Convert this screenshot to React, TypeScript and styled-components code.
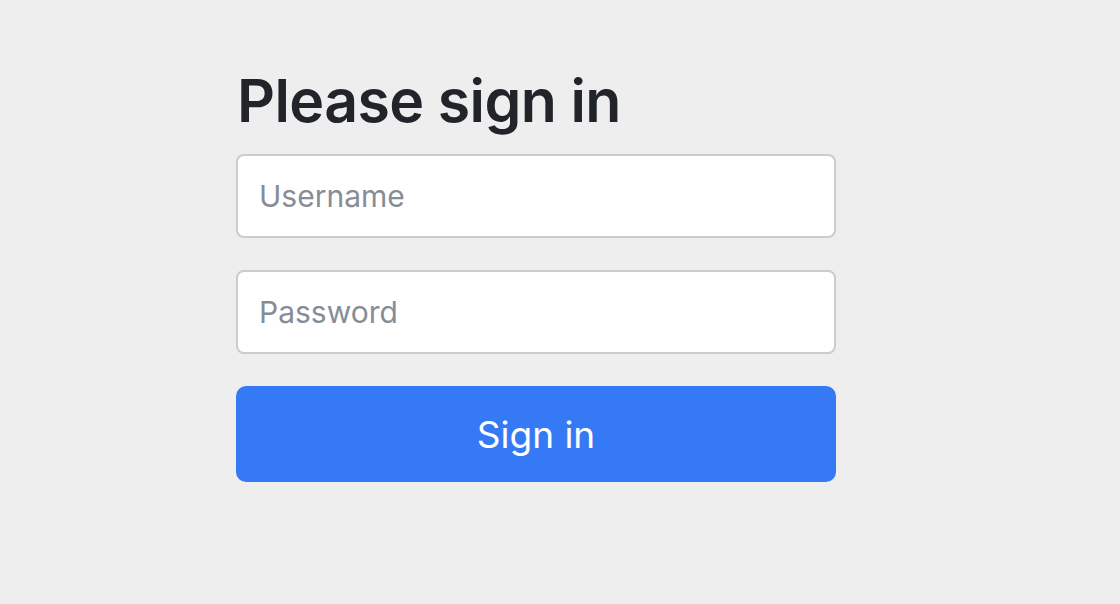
import React from "react";
import styled, { createGlobalStyle } from "styled-components";

const GlobalStyle = createGlobalStyle`
  html, body {
    margin: 0;
    padding: 0;
    background: #eeeeee;
  }
  body {
    font-family: Inter, "Liberation Sans", sans-serif;
  }
`;

const Page = styled.div`
  width: 1120px;
  height: 604px;
  background: #eeeeee;
  box-sizing: border-box;
  padding: 66px 0 0 236px;
`;

const Form = styled.form`
  width: 600px;
  display: flex;
  flex-direction: column;
`;

const Heading = styled.h2`
  margin: -2px 0 16px 1px;
  font-size: 59px;
  font-weight: 600;
  line-height: 74px;
  color: #212529;
  letter-spacing: -0.6px;
`;

const Field = styled.input`
  box-sizing: border-box;
  height: 84px;
  width: 100%;
  margin: 0 0 32px;
  padding: 0 21px;
  border: 2px solid #cccccc;
  border-radius: 8px;
  background: #ffffff;
  font-family: Inter, "Liberation Sans", sans-serif;
  font-size: 30px;
  color: #212529;
  outline: none;
  &::placeholder {
    color: #868d96;
  }
`;

const Button = styled.button`
  box-sizing: border-box;
  height: 96px;
  width: 100%;
  border: none;
  border-radius: 10px;
  background: #3679f5;
  color: #ffffff;
  font-family: Inter, "Liberation Sans", sans-serif;
  font-size: 37px;
  font-weight: 400;
  cursor: pointer;
`;

export default function App() {
  return (
    <>
      <GlobalStyle />
      <Page>
        <Form onSubmit={(e) => e.preventDefault()}>
          <Heading>Please sign in</Heading>
          <Field type="text" placeholder="Username" />
          <Field type="password" placeholder="Password" />
          <Button type="submit">Sign in</Button>
        </Form>
      </Page>
    </>
  );
}
